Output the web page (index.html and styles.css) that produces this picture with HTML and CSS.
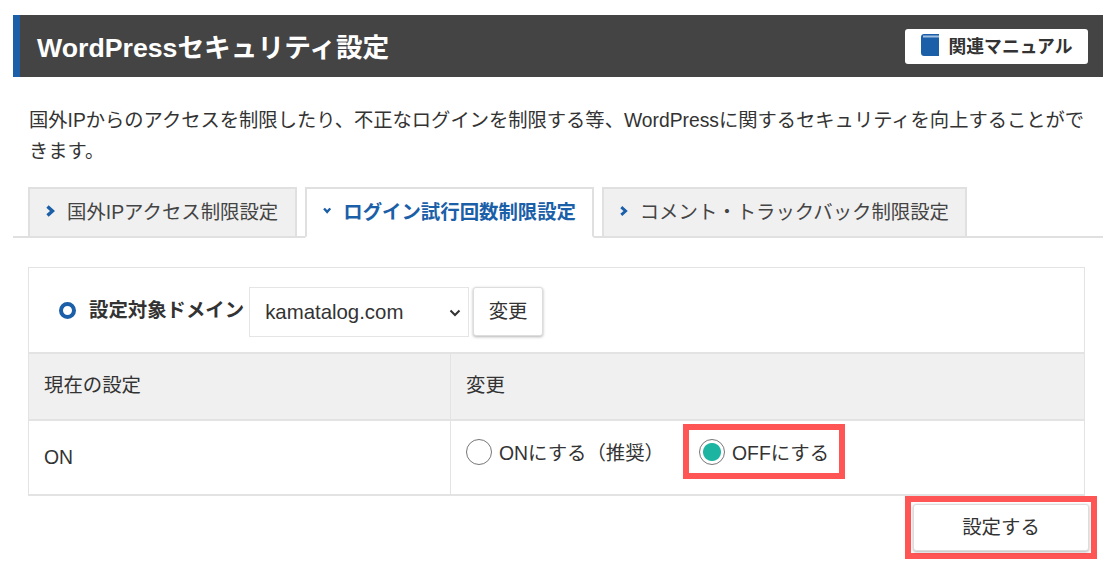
FILE: index.html
```html
<!DOCTYPE html>
<html lang="ja">

<head>
    <meta charset="UTF-8" />
    <meta name="viewport" content="width=device-width, initial-scale=1.0" />
    <title>WordPressセキュリティ設定</title>
    <link rel="stylesheet" href="styles.css">
</head>

<body>
    <header class="page-head">
        <h1>WordPressセキュリティ設定</h1>
        <a class="manual-btn" href="#">
            <svg class="book" width="18" height="22" viewBox="0 0 18 22">
                <path d="M3 0H18V22H3C1.3 22 0 20.7 0 19V3C0 1.3 1.3 0 3 0Z" fill="#1a5fa8" />
                <rect x="2" y="1.5" width="16" height="2" fill="#9fc0e2" />
            </svg>
            関連マニュアル
        </a>
    </header>

    <p class="lead">国外IPからのアクセスを制限したり、不正なログインを制限する等、WordPressに関するセキュリティを向上することができます。</p>

    <nav class="tabs">
        <a class="tab" href="#">
            <svg class="chev" width="9" height="12" viewBox="0 0 9 12"><path d="M1.5 1.5L6.5 6L1.5 10.5" /></svg>
            国外IPアクセス制限設定
        </a>
        <a class="tab active" href="#">
            <svg class="chev" width="12" height="9" viewBox="0 0 12 9"><path d="M1.5 1.5L6 6.5L10.5 1.5" /></svg>
            ログイン試行回数制限設定
        </a>
        <a class="tab" href="#">
            <svg class="chev" width="9" height="12" viewBox="0 0 9 12"><path d="M1.5 1.5L6.5 6L1.5 10.5" /></svg>
            コメント・トラックバック制限設定
        </a>
    </nav>

    <section class="panel">
        <div class="domain-row">
            <span class="ring"></span>
            <strong>設定対象ドメイン</strong>
            <div class="fake-select">
                <span>kamatalog.com</span>
                <svg width="12" height="8" viewBox="0 0 12 8"><path d="M1.5 1.5L6 6L10.5 1.5" /></svg>
            </div>
            <button class="small-btn" type="button">変更</button>
        </div>
        <div class="grid-row head">
            <div class="cell">現在の設定</div>
            <div class="cell">変更</div>
        </div>
        <div class="grid-row body">
            <div class="cell">ON</div>
            <div class="cell options">
                <label class="opt plain"><span class="radio"></span>ONにする（推奨）</label>
                <label class="opt marked"><span class="radio on"></span>OFFにする</label>
            </div>
        </div>
    </section>

    <div class="submit-row">
        <div class="submit-mark">
            <button class="submit-btn" type="button">設定する</button>
        </div>
    </div>
</body>

</html>
```

FILE: styles.css
```css
* {
    box-sizing: border-box;
}

body {
    font-family: "Liberation Sans", "Noto Sans CJK JP", sans-serif;
    background: #fff;
    color: #333;
    margin: 0;
    padding: 15px 13px 0;
    font-size: 19.4px;
    overflow: hidden;
}

.page-head {
    height: 62px;
    background: #444;
    border-left: 7px solid #1a5fa8;
    display: flex;
    justify-content: space-between;
    align-items: center;
    padding: 0 15px 0 17px;
}

.page-head h1 {
    margin: 0 0 2px;
    color: #fff;
    font-size: 26.7px;
    font-weight: bold;
}

.manual-btn {
    width: 183px;
    height: 35px;
    background: #fff;
    border-radius: 3px;
    color: #333;
    font-size: 17.8px;
    font-weight: bold;
    text-decoration: none;
    display: flex;
    align-items: center;
    justify-content: center;
    gap: 10px;
    padding: 0 0 2px;
}

.lead {
    margin: 28px 0 0;
    padding: 0 8px 0 16px;
    font-size: 19.3px;
    line-height: 31px;
    height: 61px;
}

.tabs {
    margin-top: 21px;
    height: 51px;
    display: flex;
    gap: 8px;
    padding-left: 15px;
    border-bottom: 2px solid #e0e0e0;
}

.tab {
    height: 51px;
    padding: 0 16px 4px;
    display: flex;
    align-items: center;
    gap: 12px;
    background: #f0f0f0;
    border: 2px solid #e0e0e0;
    color: #444;
    text-decoration: none;
    white-space: nowrap;
}

.tab:nth-child(1) {
    width: 269px;
}

.tab:nth-child(2) {
    width: 289px;
}

.tab:nth-child(3) {
    width: 365px;
}

.tab.active {
    background: #fff;
    border-bottom-color: #fff;
    color: #1a5fa8;
    font-weight: bold;
}

.chev path {
    fill: none;
    stroke: #1a5fa8;
    stroke-width: 3.4;
}

.panel {
    margin: 29px 18px 0 15px;
    border: 1px solid #e3e3e3;
    border-bottom-width: 2px;
}

.domain-row {
    height: 84px;
    display: flex;
    align-items: center;
    padding-left: 30px;
}

.ring {
    width: 17px;
    height: 17px;
    border: 4px solid #1a5fa8;
    border-radius: 50%;
    margin-right: 13px;
}

.domain-row strong {
    margin-right: 5px;
    padding-bottom: 4px;
}

.fake-select {
    width: 220px;
    height: 50px;
    margin-top: 3px;
    border: 1px solid #e5e5e5;
    display: flex;
    align-items: center;
    justify-content: space-between;
    padding: 2px 7px 0 15px;
    font-size: 20.4px;
}

.fake-select path {
    fill: none;
    stroke: #333;
    stroke-width: 2;
}

.small-btn {
    width: 70px;
    height: 49px;
    margin: 2px 0 0 4px;
    padding-bottom: 5px;
    background: #fff;
    border: 1px solid #ddd;
    border-radius: 3px;
    box-shadow: 0 1px 3px rgba(0, 0, 0, 0.3);
    font: inherit;
    color: #333;
}

.grid-row {
    display: grid;
    grid-template-columns: 421px 1fr;
    border-top: 2px solid #e3e3e3;
}

.grid-row.head {
    height: 67px;
    background: #f0f0f0;
}

.grid-row.head .cell {
    padding-bottom: 6px;
}

.grid-row.body {
    height: 75px;
}

.cell {
    padding: 0 15px;
    display: flex;
    align-items: center;
}

.cell + .cell {
    border-left: 1px solid #e3e3e3;
}

.options {
    gap: 30px;
    align-items: flex-start;
    padding-top: 3px;
}

.opt {
    display: flex;
    align-items: center;
    gap: 7px;
    height: 55px;
    white-space: nowrap;
}

.opt.plain {
    width: 187px;
}

.opt.marked {
    border: 6px solid #f55;
    padding: 0 10px;
    width: 162px;
}

.radio {
    width: 26px;
    height: 26px;
    border: 1px solid #777;
    border-radius: 50%;
    background: #fff;
    flex-shrink: 0;
}

.radio.on {
    background: radial-gradient(circle, #1db5a2 0 8.5px, #fff 9.5px);
}

.submit-row {
    display: flex;
    justify-content: flex-end;
    padding-right: 6px;
}

.submit-mark {
    border: 6px solid #f55;
    padding: 2px;
    width: 192px;
    height: 63px;
}

.submit-btn {
    width: 100%;
    height: 100%;
    padding-bottom: 6px;
    background: #fff;
    border: 1px solid #ddd;
    border-radius: 3px;
    box-shadow: 0 1px 3px rgba(0, 0, 0, 0.3);
    font: inherit;
    color: #333;
}
```
